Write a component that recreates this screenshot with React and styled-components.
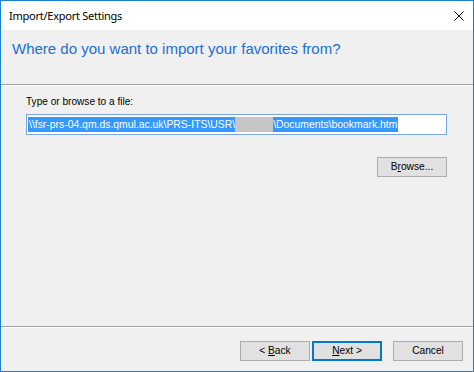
import React from "react";
import styled, { createGlobalStyle } from "styled-components";

const Global = createGlobalStyle`
  html, body { margin: 0; padding: 0; background: #f0f0f0; }
  * { box-sizing: border-box; }
`;

const Window = styled.div`
  width: 474px;
  height: 372px;
  border: 1px solid #1a7fd6;
  background: #f0f0f0;
  display: flex;
  flex-direction: column;
  font-family: "Liberation Sans", Arial, sans-serif;
  color: #000;
`;

const TitleBar = styled.div`
  height: 29px;
  background: #fff;
  display: flex;
  align-items: center;
  justify-content: space-between;
  padding: 0 9px 0 8px;
`;

const Title = styled.span`
  font-family: "Noto Sans", "Open Sans", sans-serif;
  font-size: 11px;
  letter-spacing: -0.25px;
  color: #000;
`;

const CloseBtn = styled.span`
  display: flex;
  width: 10px;
  height: 10px;
`;

const Header = styled.div`
  height: 54px;
  padding: 10px 11px;
`;

const Heading = styled.h1`
  margin: 0;
  font-family: "Liberation Sans", Arial, sans-serif;
  font-weight: normal;
  font-size: 15px;
  line-height: 18px;
  color: #1b6fd8;
`;

const Etched = styled.div`
  height: 2px;
  border-top: 1px solid #a0a0a0;
  border-bottom: 1px solid #ffffff;
`;

const Body = styled.div`
  flex: 1;
  padding: 10px 26px 0 25px;
  display: flex;
  flex-direction: column;
`;

const Label = styled.label`
  font-size: 10.1px;
  line-height: 12px;
  margin-bottom: 6px;
`;

const Field = styled.div`
  height: 21px;
  border: 1px solid #7aa7dd;
  background: #fff;
  padding: 2px 1px;
  display: flex;
  align-items: stretch;
  font-size: 10.4px;
  white-space: nowrap;
  overflow: hidden;
`;

const Selected = styled.span`
  background: #3399ff;
  color: #fff;
  display: flex;
  align-items: center;
  padding: 0 1px;
  white-space: pre;
`;

const Redacted = styled.span`
  display: inline-block;
  width: 38px;
  align-self: stretch;
  background: #c6c6c6;
`;

const BrowseRow = styled.div`
  display: flex;
  justify-content: flex-end;
  margin-top: 22px;
`;

const Button = styled.button`
  width: 70px;
  height: 20px;
  padding: 0;
  background: #e1e1e1;
  border: 1px solid ${(p) => (p.$default ? "#0078d7" : "#adadad")};
  box-shadow: ${(p) => (p.$default ? "inset 0 0 0 1px #0078d7" : "none")};
  font-family: "Liberation Sans", Arial, sans-serif;
  font-size: 10.2px;
  line-height: 18px;
  color: #000;
  text-align: center;
  white-space: pre;
`;

const Footer = styled.div`
  height: 43px;
  display: flex;
  justify-content: flex-end;
  align-items: flex-start;
  padding: 13px 10px 0 0;
`;

const NavGroup = styled.div`
  display: flex;
  gap: 2px;
  margin-right: 11px;
`;

const U = styled.span`
  text-decoration: underline;
`;

function CloseIcon() {
  return (
    <svg width="10" height="10" viewBox="0 0 10 10">
      <path d="M0.5 0.5 L9.5 9.5 M9.5 0.5 L0.5 9.5" stroke="#000" strokeWidth="1" fill="none" />
    </svg>
  );
}

export default function App() {
  return (
    <>
      <Global />
      <Window>
        <TitleBar>
          <Title>Import/Export Settings</Title>
          <CloseBtn>
            <CloseIcon />
          </CloseBtn>
        </TitleBar>
        <Header>
          <Heading>Where do you want to import your favorites from?</Heading>
        </Header>
        <Etched />
        <Body>
          <Label>Type or browse to a file:</Label>
          <Field>
            <Selected>
              {"\\\\fsr-prs-04.qm.ds.qmul.ac.uk\\PRS-ITS\\USR\\"}
              <Redacted />
              {"\\Documents\\bookmark.htm"}
            </Selected>
          </Field>
          <BrowseRow>
            <Button>
              B<U>r</U>owse...
            </Button>
          </BrowseRow>
        </Body>
        <Etched />
        <Footer>
          <NavGroup>
            <Button>
              {"< "}
              <U>B</U>ack
            </Button>
            <Button $default>
              <U>N</U>
              {"ext >"}
            </Button>
          </NavGroup>
          <Button>Cancel</Button>
        </Footer>
      </Window>
    </>
  );
}
